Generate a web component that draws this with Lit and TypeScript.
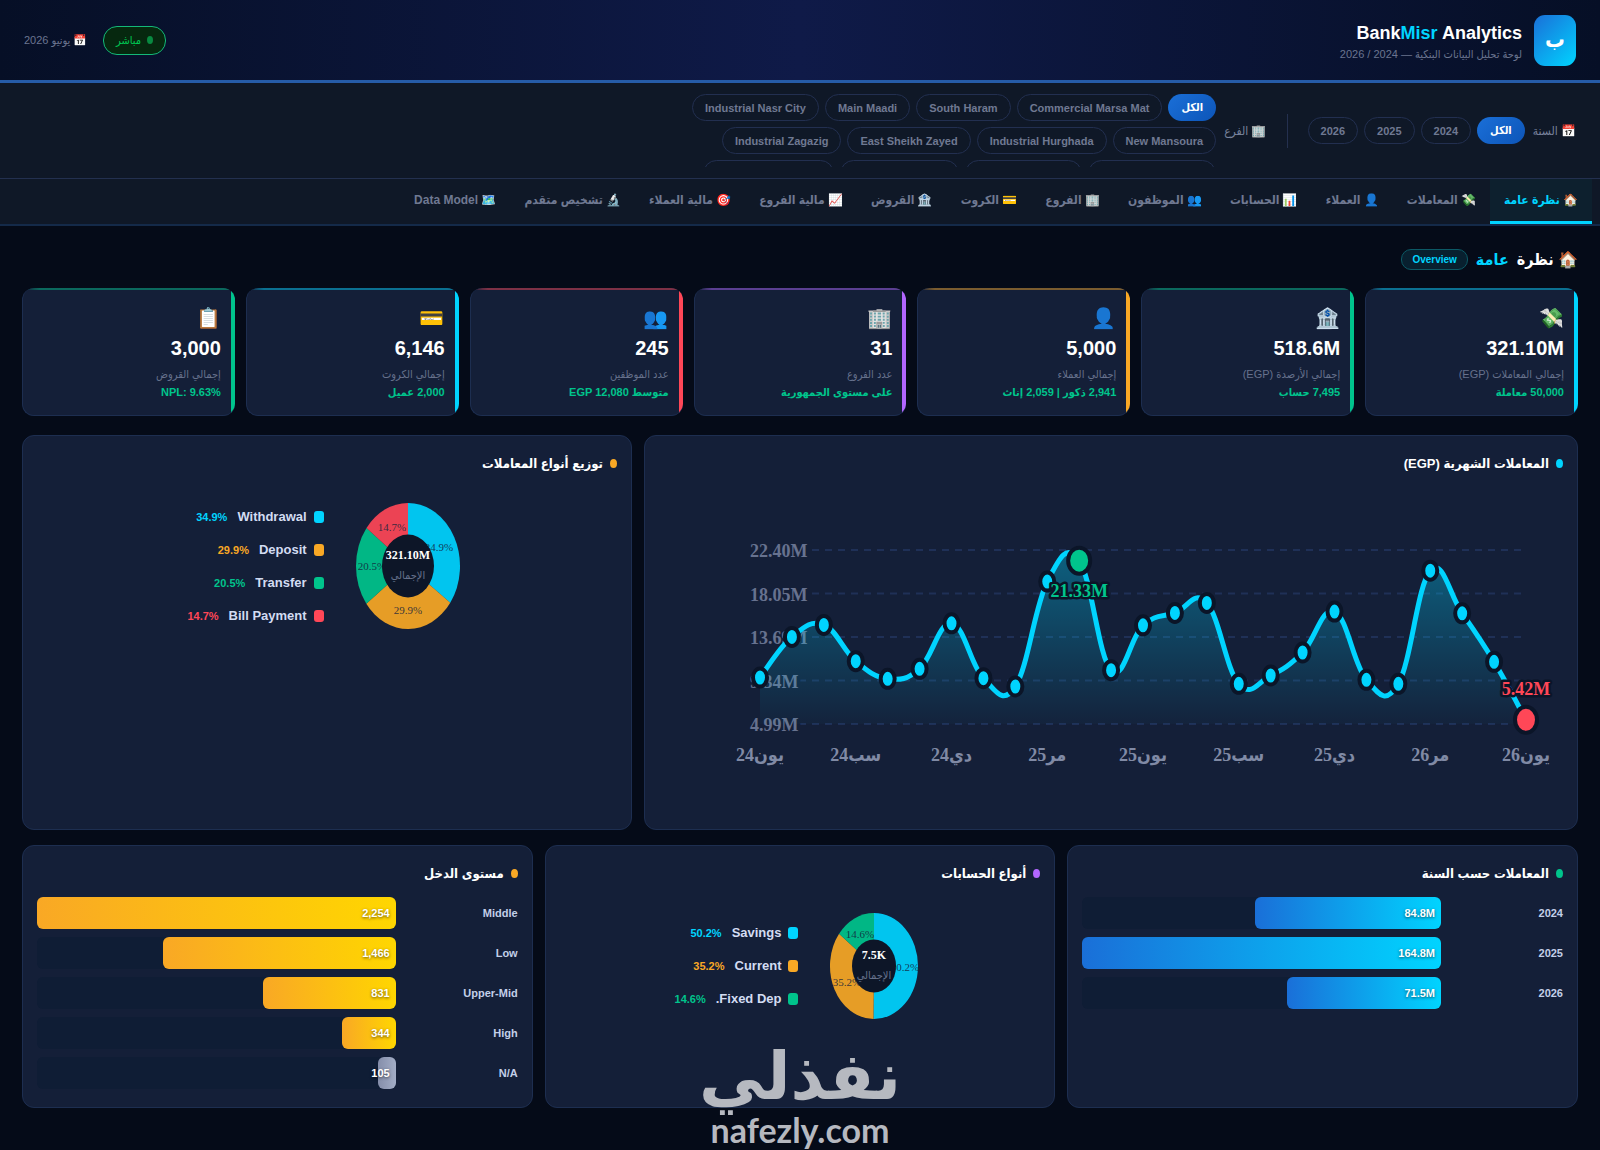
import { LitElement, html, svg, css } from "lit";
import { customElement, property, state } from "lit/decorators.js";
import { classMap } from "lit/directives/class-map.js";

const CYAN = "#00d4ff";
const ORANGE = "#f9a825";
const GREEN = "#00c48c";
const RED = "#ff4757";

interface Slice {
  name: string;
  pct: number;
  color: string;
  dx: number;
  dy: number;
}

interface Bar {
  label: string;
  text: string;
  width: number;
  muted?: boolean;
}

const BRANCHES = [
  "الكل",
  "Commercial Marsa Mat",
  "South Haram",
  "Main Maadi",
  "Industrial Nasr City",
  "New Mansoura",
  "Industrial Hurghada",
  "East Sheikh Zayed",
  "Industrial Zagazig",
];

/* Widths of the chips of the third, cut-off row. */
const CUT_CHIPS = [128, 117, 119, 131];

const TABS = [
  ["🏠", "نظرة عامة"],
  ["💸", "المعاملات"],
  ["👤", "العملاء"],
  ["📊", "الحسابات"],
  ["👥", "الموظفون"],
  ["🏢", "الفروع"],
  ["💳", "الكروت"],
  ["🏦", "القروض"],
  ["📈", "مالية الفروع"],
  ["🎯", "مالية العملاء"],
  ["🔬", "تشخيص متقدم"],
  ["🗺️", "Data Model"],
];

const KPIS = [
  ["💸", "321.10M", "إجمالي المعاملات (EGP)", "50,000 معاملة", "cyan"],
  ["🏦", "518.6M", "إجمالي الأرصدة (EGP)", "7,495 حساب", "green"],
  ["👤", "5,000", "إجمالي العملاء", "2,941 ذكور | 2,059 إناث", "orange"],
  ["🏢", "31", "عدد الفروع", "على مستوى الجمهورية", "purple"],
  ["👥", "245", "عدد الموظفين", "متوسط EGP 12,080", "red"],
  ["💳", "6,146", "إجمالي الكروت", "2,000 عميل", "cyan"],
  ["📋", "3,000", "إجمالي القروض", "NPL: 9.63%", "green"],
];

const MONTHLY = [
  9.65, 13.71, 14.91, 11.28, 9.52, 10.52, 15.07, 9.58, 8.75, 19.24, 21.33, 10.38, 14.87,
  16.11, 17.11, 9.02, 9.85, 12.15, 16.24, 9.42, 9.02, 20.33, 16.07, 11.22, 5.42,
];
const MONTH_LABELS = ["يون24", "سب24", "دي24", "مر25", "يون25", "سب25", "دي25", "مر26", "يون26"];
const TICKS = [22.4, 18.05, 13.69, 9.34, 4.99];

const TYPES: Slice[] = [
  { name: "Withdrawal", pct: 34.9, color: CYAN, dx: 31, dy: -15 },
  { name: "Deposit", pct: 29.9, color: ORANGE, dx: 0, dy: 48 },
  { name: "Transfer", pct: 20.5, color: GREEN, dx: -36, dy: 4 },
  { name: "Bill Payment", pct: 14.7, color: RED, dx: -16, dy: -35 },
];

const ACCOUNTS: Slice[] = [
  { name: "Savings", pct: 50.2, color: CYAN, dx: 31, dy: 5 },
  { name: "Current", pct: 35.2, color: ORANGE, dx: -27, dy: 20 },
  { name: "Fixed Dep.", pct: 14.6, color: GREEN, dx: -14, dy: -28 },
];

const YEARS: Bar[] = [
  { label: "2024", text: "84.8M", width: 52 },
  { label: "2025", text: "164.8M", width: 100 },
  { label: "2026", text: "71.5M", width: 43 },
];

const INCOME: Bar[] = [
  { label: "Middle", text: "2,254", width: 100 },
  { label: "Low", text: "1,466", width: 65 },
  { label: "Upper-Mid", text: "831", width: 37 },
  { label: "High", text: "344", width: 15 },
  { label: "N/A", text: "105", width: 5, muted: true },
];

@customElement("trend-chart")
export class TrendChart extends LitElement {
  static styles = css`
    :host {
      display: block;
    }
    .chart {
      display: block;
      width: 100%;
      height: auto;
      direction: ltr;
      font-family: "Liberation Serif", "DejaVu Sans Condensed", "DejaVu Sans", serif;
      font-size: 18px;
      font-weight: 700;
    }
    .grid {
      stroke: #1f3057;
      stroke-width: 2;
      stroke-dasharray: 7 6;
    }
    .tick {
      fill: #67728f;
      stroke: #141f38;
      stroke-width: 8;
      paint-order: stroke;
    }
    .month {
      fill: #808aa5;
      text-anchor: middle;
      direction: rtl;
    }
    .line {
      fill: none;
      stroke: #00d4ff;
      stroke-width: 5;
    }
    .dot {
      fill: #00d4ff;
      stroke: #0b1528;
      stroke-width: 4;
    }
    .high {
      fill: #00c48c;
    }
    .low {
      fill: #ff4757;
    }
    .note {
      text-anchor: middle;
      stroke: #0b1528;
      stroke-width: 5;
      stroke-linejoin: round;
      paint-order: stroke;
    }
  `;

  private x(i: number) {
    return 101 + (i * 766) / 24;
  }

  private y(v: number) {
    return 63 + (22.4 - v) * 10;
  }

  private curve() {
    const p = MONTHLY.map((v, i) => [this.x(i), this.y(v)]);
    const k = 0.2;
    let d = `M${p[0][0]},${p[0][1]}`;
    for (let i = 0; i < p.length - 1; i++) {
      const a = p[Math.max(0, i - 1)];
      const b = p[i];
      const c = p[i + 1];
      const e = p[Math.min(p.length - 1, i + 2)];
      d += ` C${b[0] + (c[0] - a[0]) * k},${b[1] + (c[1] - a[1]) * k}`;
      d += ` ${c[0] - (e[0] - b[0]) * k},${c[1] - (e[1] - b[1]) * k} ${c[0]},${c[1]}`;
    }
    return d;
  }

  render() {
    const d = this.curve();
    const last = MONTHLY.length - 1;
    const top = MONTHLY.indexOf(Math.max(...MONTHLY));
    const area = `${d} L${this.x(last)},${this.y(4.99)} L${this.x(0)},${this.y(4.99)} Z`;
    return html`<svg class="chart" viewBox="0 0 904 304" role="img" aria-label="المعاملات الشهرية">
      <defs>
        <linearGradient id="area" x1="0" y1="0" x2="0" y2="1">
          <stop offset="0" stop-color="#00d4ff" stop-opacity="0.36" />
          <stop offset="1" stop-color="#00d4ff" stop-opacity="0.02" />
        </linearGradient>
      </defs>
      ${TICKS.map(
        (t) => svg`
          <line class="grid" x1=${this.x(0)} x2=${this.x(last)} y1=${this.y(t)} y2=${this.y(t)} />
          <text class="tick" x="91" y=${this.y(t) + 7}>${t.toFixed(2) + "M"}</text>`
      )}
      <path d=${area} fill="url(#area)" />
      <path class="line" d=${d} />
      ${MONTHLY.map((v, i) =>
        i === top || i === last
          ? svg`<ellipse class="dot ${i === top ? "high" : "low"}" cx=${this.x(i)} cy=${this.y(v)} rx="11" ry="13" />`
          : svg`<ellipse class="dot" cx=${this.x(i)} cy=${this.y(v)} rx="7" ry="9" />`
      )}
      <text class="note high" x=${this.x(top)} y="110">21.33M</text>
      <text class="note low" x=${this.x(last)} y="208">5.42M</text>
      ${MONTH_LABELS.map((m, i) => svg`<text class="month" x=${this.x(i * 3)} y="274">${m}</text>`)}
    </svg>`;
  }
}

@customElement("donut-chart")
export class DonutChart extends LitElement {
  @property({ attribute: false }) slices: Slice[] = [];
  @property() total = "";
  @property({ type: Number }) rx = 52;
  @property({ type: Number }) ry = 63;

  static styles = css`
    :host {
      display: flex;
      align-items: center;
      justify-content: center;
      gap: 25px;
      padding-top: 7px;
    }
    .ring {
      display: block;
      flex: none;
      direction: ltr;
      font-family: "Liberation Serif", "DejaVu Sans Condensed", serif;
      text-anchor: middle;
    }
    .share {
      font-size: 11px;
      fill: #14233c;
      fill-opacity: 0.85;
    }
    .hole {
      fill: #0d1628;
    }
    .total {
      font-size: 12px;
      font-weight: 700;
      fill: #fff;
    }
    .caption {
      font-size: 11px;
      fill: #66718c;
      direction: rtl;
    }
    .legend {
      display: grid;
      gap: 15px;
      margin: 0;
      padding: 0;
      list-style: none;
    }
    .item {
      display: flex;
      align-items: center;
      line-height: 18px;
    }
    .swatch {
      width: 10px;
      height: 12px;
      border-radius: 3px;
      margin-inline-end: 7px;
    }
    .name {
      font-size: 13px;
      font-weight: 700;
      color: #d3dcf2;
      margin-inline-end: 10px;
    }
    .pct {
      font-size: 11px;
      font-weight: 700;
    }
  `;

  render() {
    const w = this.rx * 2 + 14;
    const h = this.ry * 2 + 18;
    const cx = w / 2;
    const cy = h / 2;
    let at = 0;
    const sum = this.slices.reduce((s, i) => s + i.pct, 0);
    const pt = (f: number) => {
      const a = f * 2 * Math.PI;
      return `${cx + this.rx * Math.sin(a)},${cy - this.ry * Math.cos(a)}`;
    };
    return html`
      <svg class="ring" width=${w} height=${h} viewBox="0 0 ${w} ${h}" role="img" aria-label=${this.total}>
        ${this.slices.map((s) => {
          const f0 = at;
          at += s.pct / sum;
          const big = at - f0 > 0.5 ? 1 : 0;
          return svg`<path fill=${s.color} fill-opacity="0.92"
            d="M${cx},${cy} L${pt(f0)} A${this.rx},${this.ry} 0 ${big} 1 ${pt(at)} Z" />`;
        })}
        ${this.slices.map(
          (s) => svg`<text class="share" x=${cx + s.dx} y=${cy + s.dy}>${s.pct.toFixed(1) + "%"}</text>`
        )}
        <ellipse class="hole" cx=${cx} cy=${cy} rx=${this.rx / 2} ry=${this.ry / 2} />
        <text class="total" x=${cx} y=${cy - 7}>${this.total}</text>
        <text class="caption" x=${cx} y=${cy + 13}>الإجمالي</text>
      </svg>
      <ul class="legend">
        ${this.slices.map(
          (s) => html`<li class="item">
            <span class="swatch" style="background:${s.color}"></span>
            <span class="name">${s.name}</span>
            <span class="pct" style="color:${s.color}">${s.pct.toFixed(1)}%</span>
          </li>`
        )}
      </ul>
    `;
  }
}

@customElement("bar-list")
export class BarList extends LitElement {
  @property({ attribute: false }) bars: Bar[] = [];
  @property() tone = "blue";

  static styles = css`
    :host {
      display: grid;
      gap: 8px;
    }
    .row {
      display: grid;
      grid-template-columns: 114px 1fr;
      gap: 8px;
      align-items: center;
    }
    .label {
      font-size: 11px;
      font-weight: 700;
      color: #c3cfe8;
    }
    .track {
      height: 32px;
      border-radius: 6px;
      background: #0f1d35;
    }
    .fill {
      display: flex;
      align-items: center;
      box-sizing: border-box;
      height: 32px;
      padding-inline-start: 6px;
      border-radius: 6px;
      font-size: 11px;
      font-weight: 700;
      color: #fff;
      white-space: nowrap;
      text-shadow: 0 1px 3px rgba(0, 0, 0, 0.6);
    }
    .blue {
      background: linear-gradient(90deg, #1a6fd8, #00d4ff);
    }
    .gold {
      background: linear-gradient(90deg, #f9a825, #ffd600);
    }
    .muted {
      background: linear-gradient(90deg, #858eaa, #a3adc6);
    }
  `;

  render() {
    return this.bars.map(
      (b) => html`<div class="row">
        <span class="label">${b.label}</span>
        <div class="track">
          <div class="fill ${b.muted ? "muted" : this.tone}" style="width:${b.width}%">${b.text}</div>
        </div>
      </div>`
    );
  }
}

@customElement("app-root")
export class AppRoot extends LitElement {
  @state() private year = "الكل";
  @state() private branch = "الكل";
  @state() private tab = 0;

  static styles = css`
    :host {
      display: block;
      position: relative;
      box-sizing: border-box;
      min-height: 100vh;
      overflow: hidden;
      direction: rtl;
      background: #050b18;
      color: #fff;
      font-family: "Liberation Sans", "DejaVu Sans Condensed", "DejaVu Sans", "Noto Color Emoji",
        sans-serif;
    }
    .header {
      display: flex;
      align-items: center;
      justify-content: space-between;
      height: 80px;
      padding: 0 24px;
      border-bottom: 3px solid #265ca8;
      background: linear-gradient(90deg, #060f26, #0f1a48 50%, #060f26);
    }
    .brand,
    .status {
      display: flex;
      align-items: center;
    }
    .brand {
      gap: 12px;
    }
    .words {
      padding-top: 4px;
    }
    .logo {
      display: grid;
      place-items: center;
      width: 42px;
      height: 51px;
      border-radius: 11px;
      background: linear-gradient(135deg, #1a6fd8, #00d4ff);
      font-size: 22px;
      font-weight: 700;
    }
    .title {
      margin: 0;
      font-size: 18px;
      line-height: 24px;
      font-weight: 700;
      text-align: right;
    }
    .accent {
      color: #00d4ff;
    }
    .tagline {
      margin: 0;
      font-size: 11px;
      line-height: 18px;
      color: #6b7590;
    }
    .status {
      gap: 16px;
      font-size: 11px;
      color: #6b7590;
    }
    .live {
      display: flex;
      align-items: center;
      gap: 6px;
      height: 27px;
      padding: 0 12px;
      border: 1px solid #14b878;
      border-radius: 14px;
      background: #06280f;
      color: #00c853;
    }
    .pulse {
      width: 6px;
      height: 8px;
      border-radius: 50%;
      background: #088a41;
    }
    .filters {
      display: flex;
      align-items: center;
      height: 95px;
      padding: 0 24px;
      border-bottom: 1px solid #23304f;
      background: #0f1827;
    }
    .group {
      display: flex;
      align-items: center;
      gap: 8px;
    }
    .caption {
      font-size: 12px;
      color: #78829c;
      white-space: nowrap;
    }
    .chips {
      display: flex;
      flex-wrap: wrap;
      align-items: center;
      gap: 6px;
    }
    .branches {
      align-items: flex-start;
      width: 532px;
      height: 73px;
      overflow: hidden;
    }
    .chip {
      box-sizing: border-box;
      height: 27px;
      padding: 0 12px;
      border: 1px solid #222f50;
      border-radius: 14px;
      background: transparent;
      color: #6f7992;
      font: inherit;
      font-size: 11px;
      font-weight: 700;
    }
    .on {
      border-color: transparent;
      background: linear-gradient(135deg, #1a6fd8, #0d55b8) border-box;
      color: #fff;
    }
    .rule {
      width: 1px;
      height: 34px;
      margin: 0 20px;
      background: #24304f;
    }
    .tabs {
      display: flex;
      height: 45px;
      padding: 0 8px;
      border-bottom: 2px solid #142a49;
      background: #0f1827;
    }
    .tab {
      box-sizing: border-box;
      padding: 11px 14px 0;
      border-bottom: 3px solid transparent;
      color: #6f7992;
      font-size: 12px;
      line-height: 20px;
      font-weight: 700;
      text-decoration: none;
      white-space: nowrap;
    }
    .current {
      border-color: #00d4ff;
      background: #0d202e;
      color: #00d4ff;
    }
    .content {
      padding: 20px 22px 42px;
    }
    .heading {
      display: flex;
      align-items: center;
      gap: 8px;
      height: 26px;
      margin: 0 0 16px;
      font-size: 16px;
      font-weight: 700;
    }
    .tag {
      padding: 0 10px;
      border: 1px solid #0c5965;
      border-radius: 10px;
      background: #08202f;
      color: #00d4ff;
      font-size: 10px;
      line-height: 19px;
    }
    .kpis {
      display: grid;
      grid-template-columns: repeat(7, minmax(0, 1fr));
      gap: 11px;
      margin-bottom: 19px;
    }
    .card {
      box-sizing: border-box;
      border: 1px solid #1d2e50;
      border-radius: 12px;
      background: #141f38;
    }
    .kpi {
      height: 128px;
      padding: 16px 14px 0;
      border-width: 0 0 1px 1px;
      background:
        linear-gradient(var(--tone), var(--tone)) right / 4px 100% no-repeat,
        linear-gradient(90deg, transparent, color-mix(in srgb, var(--tone) 45%, #141f38) 8%) top / 100% 2px
          no-repeat,
        #141f38;
    }
    .cyan {
      --tone: #00d4ff;
    }
    .green {
      --tone: #00c48c;
    }
    .orange {
      --tone: #f9a825;
    }
    .purple {
      --tone: #b266ff;
    }
    .red {
      --tone: #ff4757;
    }
    .glyph {
      font-size: 20px;
      line-height: 28px;
    }
    .value {
      font-size: 20px;
      line-height: 32px;
      font-weight: 700;
    }
    .label {
      font-size: 11px;
      line-height: 20px;
      color: #66718c;
    }
    .sub {
      font-size: 11px;
      line-height: 16px;
      font-weight: 700;
      color: #00c48c;
    }
    .wide {
      display: grid;
      grid-template-columns: minmax(0, 934fr) minmax(0, 610fr);
      gap: 12px;
      margin-bottom: 15px;
    }
    .thirds {
      display: grid;
      grid-template-columns: repeat(3, minmax(0, 1fr));
      gap: 12px;
    }
    .panel {
      padding: 14px;
    }
    .tall {
      min-height: 395px;
    }
    .short {
      min-height: 263px;
    }
    .name {
      display: flex;
      align-items: center;
      gap: 7px;
      height: 26px;
      margin: 0 0 11px;
      font-size: 13px;
      font-weight: 700;
    }
    .bullet {
      width: 7px;
      height: 9px;
      border-radius: 50%;
      background: var(--tone);
    }
    .watermark {
      position: absolute;
      bottom: 0;
      left: 50%;
      transform: translateX(-50%);
      display: flex;
      flex-direction: column;
      align-items: center;
      color: #b6b9c0;
      pointer-events: none;
    }
    .mark {
      font-family: "DejaVu Sans", sans-serif;
      font-size: 66px;
      line-height: 66px;
      font-weight: 700;
    }
    .site {
      font-family: Lato, sans-serif;
      font-size: 34px;
      line-height: 40px;
      font-weight: 700;
    }
  `;

  private chip(text: string, on: boolean, pick: () => void) {
    return html`<button class=${classMap({ chip: true, on })} aria-pressed=${on} @click=${pick}>${text}</button>`;
  }

  render() {
    return html`
      <header class="header">
        <div class="brand">
          <div class="logo">ب</div>
          <div class="words">
            <h1 class="title" dir="ltr">Bank<span class="accent">Misr</span> Analytics</h1>
            <p class="tagline">لوحة تحليل البيانات البنكية — 2024 / 2026</p>
          </div>
        </div>
        <div class="status">
          <span class="live"><span class="pulse"></span>مباشر</span>
          <span>📅 يونيو 2026</span>
        </div>
      </header>

      <div class="filters">
        <div class="group" role="group" aria-labelledby="year">
          <span class="caption" id="year">📅 السنة</span>
          <div class="chips">
            ${["الكل", "2024", "2025", "2026"].map((y) => this.chip(y, y === this.year, () => (this.year = y)))}
          </div>
        </div>
        <span class="rule"></span>
        <div class="group" role="group" aria-labelledby="branch">
          <span class="caption" id="branch">🏢 الفرع</span>
          <div class="chips branches">
            ${BRANCHES.map((b) => this.chip(b, b === this.branch, () => (this.branch = b)))}
            ${CUT_CHIPS.map((w) => html`<span class="chip" aria-hidden="true" style="width:${w}px"></span>`)}
          </div>
        </div>
      </div>

      <nav class="tabs">
        ${TABS.map(
          ([icon, text], i) => html`<a
            class=${classMap({ tab: true, current: i === this.tab })}
            href="#tab-${i}"
            @click=${() => (this.tab = i)}
            >${icon} ${text}</a
          >`
        )}
      </nav>

      <main class="content">
        <h2 class="heading">
          <span>🏠 نظرة</span><span class="accent">عامة</span><span class="tag">Overview</span>
        </h2>

        <section class="kpis">
          ${KPIS.map(
            ([icon, value, label, sub, tone]) => html`<article class="card kpi ${tone}">
              <div class="glyph">${icon}</div>
              <div class="value">${value}</div>
              <div class="label">${label}</div>
              <div class="sub">${sub}</div>
            </article>`
          )}
        </section>

        <section class="wide">
          <article class="card panel tall">
            <h3 class="name cyan"><span class="bullet"></span>المعاملات الشهرية (EGP)</h3>
            <trend-chart></trend-chart>
          </article>
          <article class="card panel tall">
            <h3 class="name orange"><span class="bullet"></span>توزيع أنواع المعاملات</h3>
            <donut-chart .slices=${TYPES} total="321.10M" rx="52" ry="63"></donut-chart>
          </article>
        </section>

        <section class="thirds">
          <article class="card panel short">
            <h3 class="name green"><span class="bullet"></span>المعاملات حسب السنة</h3>
            <bar-list .bars=${YEARS} tone="blue"></bar-list>
          </article>
          <article class="card panel short">
            <h3 class="name purple"><span class="bullet"></span>أنواع الحسابات</h3>
            <donut-chart .slices=${ACCOUNTS} total="7.5K" rx="44" ry="53"></donut-chart>
          </article>
          <article class="card panel short">
            <h3 class="name orange"><span class="bullet"></span>مستوى الدخل</h3>
            <bar-list .bars=${INCOME} tone="gold"></bar-list>
          </article>
        </section>
      </main>

      <div class="watermark">
        <span class="mark">نفذلي</span>
        <span class="site" dir="ltr">nafezly.com</span>
      </div>
    `;
  }
}
